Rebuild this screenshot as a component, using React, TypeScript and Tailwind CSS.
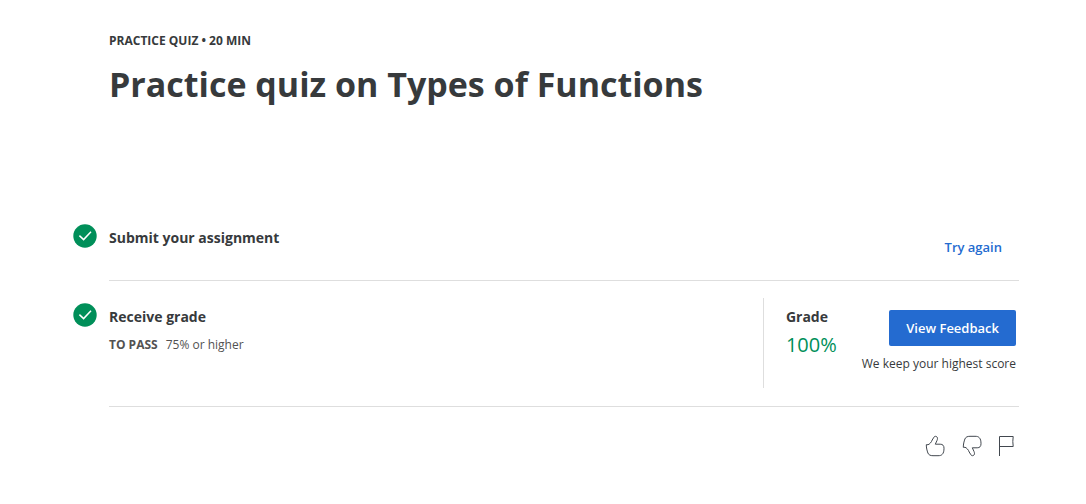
function CheckBadge() {
  return (
    <svg viewBox="0 0 24 24" className="size-6 shrink-0" role="img" aria-label="Completed">
      <circle cx="12" cy="12" r="11.7" fill="#008f59" />
      <path d="M6.400 11.600l4.200 4L18 7.800" fill="none" stroke="#fff" strokeWidth="1.5" />
    </svg>
  );
}

function ThumbIcon({ down = false }: { down?: boolean }) {
  return (
    <svg viewBox="0 0 20 22" className={down ? "h-[22px] w-5 -scale-y-100" : "h-[22px] w-5"} fill="none" stroke="#42484f" strokeLinejoin="round">
      <path d="M1.300 9.700H3C4.300 9.500 6.500 7.200 7.200 5L9 2.100C9.700 1 11.200 1.100 12 2C12.800 3 12.500 4.400 12 5.500L10.300 9.200H15.200C17.800 9.200 19 10.700 19 13.200C19 16 18.600 18 17.200 19.400C16.100 20.500 14.900 20.700 13 20.700H8C5.500 20.700 3.700 20 2.900 18C2 15.500 1.300 12.800 1.300 9.700Z" />
    </svg>
  );
}

function FlagIcon() {
  return (
    <svg viewBox="0 0 16 22" className="h-[22px] w-4" fill="none" stroke="#42484f">
      <path d="M0.500 21V1.500H14.200L13.800 6.500L14.200 11.500H0.500" />
    </svg>
  );
}

export default function App() {
  return (
    <main className="min-h-screen bg-white pt-8 pr-[67px] pb-10 pl-[73px] font-['Open_Sans',sans-serif] text-[#373a3c]">
      <header className="pl-9">
        <p className="text-xs leading-[18px] font-bold">PRACTICE QUIZ • 20 MIN</p>
        <h1 className="mt-2 text-[34px] leading-[52px] font-bold">Practice quiz on Types of Functions</h1>
      </header>

      <section className="mt-[114px] flex gap-3">
        <CheckBadge />
        <div className="flex min-h-[57px] flex-1 items-start justify-between border-b border-[#dedede]">
          <h2 className="pt-1 text-sm leading-5 font-bold">Submit your assignment</h2>
          <button className="mt-[5px] mr-[17px] h-9 pt-0.5 text-[13px] font-semibold text-[#246bd0]">Try again</button>
        </div>
      </section>

      <section className="mt-[22px] flex gap-3">
        <CheckBadge />
        <div className="-mt-[5px] flex flex-1 items-start justify-between border-b border-[#dedede] pb-[18px]">
          <div className="pt-[9px]">
            <h2 className="text-sm leading-5 font-bold">Receive grade</h2>
            <p className="mt-2 text-xs leading-5 text-[#525252]"><b className="mr-2">TO PASS</b>75% or higher</p>
          </div>
          <div className="flex h-[90px] border-l border-[#dedede] pr-[3px] pl-[22px]">
            <div className="pt-[9px]">
              <h2 className="text-sm leading-5 font-bold">Grade</h2>
              <p className="mt-1 text-xl leading-7 text-[#008f59]">100%</p>
            </div>
            <div className="ml-[25px] flex flex-col items-end pt-3">
              <button className="h-9 rounded-xs bg-[#246bd0] px-[17px] pt-0.5 text-[13px] font-semibold text-white">View Feedback</button>
              <p className="mt-2 text-xs leading-5">We keep your highest score</p>
            </div>
          </div>
        </div>
      </section>

      <footer className="mt-7 flex items-center justify-end gap-[17px] pr-1">
        <button aria-label="Like"><ThumbIcon /></button>
        <button aria-label="Dislike"><ThumbIcon down /></button>
        <button aria-label="Report"><FlagIcon /></button>
      </footer>
    </main>
  );
}
